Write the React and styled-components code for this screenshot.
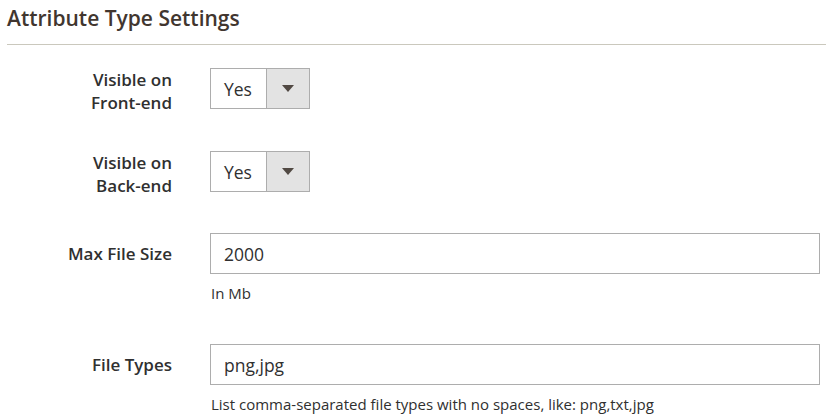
import React from "react";
import styled, { createGlobalStyle } from "styled-components";

const Global = createGlobalStyle`
  html, body { margin: 0; padding: 0; background: #fff; }
  body { font-family: "Open Sans", "Noto Sans", sans-serif; color: #303030; }
`;

const Page = styled.div`
  width: 827px;
  height: 420px;
  overflow: hidden;
  padding: 0 1px 0 7px;
  box-sizing: border-box;
`;

const Title = styled.h2`
  margin: 0;
  padding: 3px 0 0 0;
  height: 45px;
  box-sizing: border-box;
  font-size: 21px;
  font-weight: 600;
  color: #41362f;
  line-height: 30px;
  border-bottom: 1px solid #cac8bd;
`;

const Form = styled.div`
  display: flex;
  flex-direction: column;
  padding-top: 23px;
`;

const Row = styled.div`
  display: grid;
  grid-template-columns: 165px 1fr;
  column-gap: 38px;
  margin-bottom: ${(p) => p.$gap}px;
`;

const Label = styled.div`
  text-align: right;
  font-size: 17px;
  font-weight: 600;
  line-height: 23px;
  color: #303030;
  padding-top: ${(p) => p.$top}px;
`;

const Control = styled.div`
  display: flex;
  flex-direction: column;
  padding-right: 6px;
`;

const Select = styled.div`
  display: flex;
  width: 100px;
  height: 41px;
  box-sizing: border-box;
  border: 1px solid #adadad;
  background: #fff;
`;

const SelectValue = styled.div`
  flex: 1;
  display: flex;
  align-items: center;
  padding-left: 13px;
  font-size: 17.5px;
  color: #303030;
`;

const SelectButton = styled.div`
  width: 42px;
  border-left: 1px solid #adadad;
  background: #e3e3e3;
  display: flex;
  align-items: center;
  justify-content: center;
`;

const Arrow = styled.span`
  width: 0;
  height: 0;
  border-left: 6px solid transparent;
  border-right: 6px solid transparent;
  border-top: 7px solid #514943;
`;

const Input = styled.div`
  height: 41px;
  box-sizing: border-box;
  border: 1px solid #adadad;
  display: flex;
  align-items: center;
  padding-left: 13px;
  font-size: 17.5px;
  color: #303030;
`;

const Note = styled.div`
  font-size: 15px;
  line-height: 20px;
  color: #303030;
  padding-top: 9px;
  padding-left: 1px;
`;

const SelectField = ({ value }) => (
  <Select>
    <SelectValue>{value}</SelectValue>
    <SelectButton>
      <Arrow />
    </SelectButton>
  </Select>
);

export default function App() {
  return (
    <Page>
      <Global />
      <Title>Attribute Type Settings</Title>
      <Form>
        <Row $gap={37}>
          <Label $top={0}>
            Visible on
            <br />
            Front-end
          </Label>
          <Control>
            <SelectField value="Yes" />
          </Control>
        </Row>
        <Row $gap={36}>
          <Label $top={0}>
            Visible on
            <br />
            Back-end
          </Label>
          <Control>
            <SelectField value="Yes" />
          </Control>
        </Row>
        <Row $gap={41}>
          <Label $top={9}>Max File Size</Label>
          <Control>
            <Input>2000</Input>
            <Note>In Mb</Note>
          </Control>
        </Row>
        <Row $gap={0}>
          <Label $top={9}>File Types</Label>
          <Control>
            <Input>png,jpg</Input>
            <Note>List comma-separated file types with no spaces, like: png,txt,jpg</Note>
          </Control>
        </Row>
      </Form>
    </Page>
  );
}
